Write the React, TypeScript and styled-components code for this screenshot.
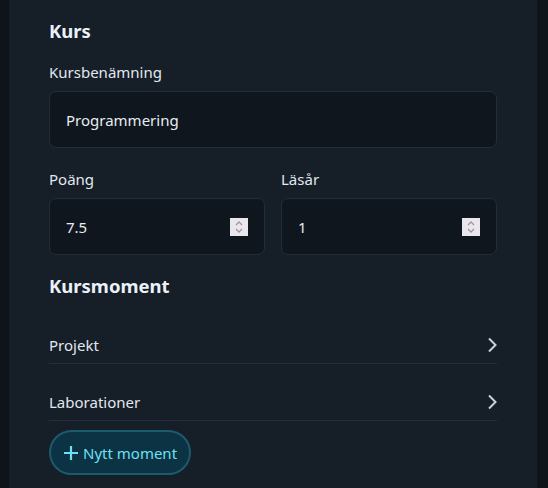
import React, { useState } from "react";
import styled, { createGlobalStyle } from "styled-components";

const GlobalStyle = createGlobalStyle`
  html, body {
    margin: 0;
    padding: 0;
    background: #0f141a;
  }
  body {
    font-family: "Noto Sans", "Open Sans", "DejaVu Sans", sans-serif;
    color: #e6edf3;
  }
`;

type Moment = { id: number; name: string };

const App: React.FC = () => {
  const [courseName, setCourseName] = useState<string>("Programmering");
  const [points, setPoints] = useState<string>("7.5");
  const [year, setYear] = useState<string>("1");
  const [moments] = useState<Moment[]>([
    { id: 1, name: "Projekt" },
    { id: 2, name: "Laborationer" },
  ]);

  return (
    <>
      <GlobalStyle />
      <Page>
        <Panel>
          <Heading $bottom={17}>Kurs</Heading>
          <Field $bottom={21}>
            <Label htmlFor="course_name">Kursbenämning</Label>
            <InputBox>
              <TextInput
                id="course_name"
                value={courseName}
                onChange={(e) => setCourseName(e.target.value)}
              />
            </InputBox>
          </Field>
          <FieldRow>
            <Field>
              <Label htmlFor="points">Poäng</Label>
              <InputBox>
                <TextInput id="points" value={points} onChange={(e) => setPoints(e.target.value)} />
                <Spinner />
              </InputBox>
            </Field>
            <Field>
              <Label htmlFor="year">Läsår</Label>
              <InputBox>
                <TextInput id="year" value={year} onChange={(e) => setYear(e.target.value)} />
                <Spinner />
              </InputBox>
            </Field>
          </FieldRow>
          <Heading $top={17} $bottom={7}>Kursmoment</Heading>
          <MomentList>
            {moments.map((m) => (
              <MomentRow key={m.id}>
                <span>{m.name}</span>
                <svg width="10" height="16" viewBox="0 0 10 16" fill="none">
                  <path d="M2 1.5l6.5 6.5-6.5 6.5" stroke="#c9d1d9" strokeWidth="2" />
                </svg>
              </MomentRow>
            ))}
          </MomentList>
          <AddButton>
            <svg width="14" height="14" viewBox="0 0 14 14">
              <path d="M7 0v14M0 7h14" stroke="currentColor" strokeWidth="2.2" />
            </svg>
            Nytt moment
          </AddButton>
        </Panel>
      </Page>
    </>
  );
};

const Spinner: React.FC = () => (
  <SpinBox>
    <svg width="10" height="14" viewBox="0 0 10 14" fill="none">
      <path d="M2 5l3-3 3 3M2 9l3 3 3-3" stroke="#9b98a3" strokeWidth="1.3" />
    </svg>
  </SpinBox>
);

const Page = styled.div`
  display: flex;
  padding: 0 11px 0 9px;
  min-height: 488px;
  box-sizing: border-box;
`;

const Panel = styled.div`
  flex: 1;
  min-width: 0;
  background: #161e27;
  padding: 17px 40px 15px 40px;
  display: flex;
  flex-direction: column;
`;

const Heading = styled.h2<{ $top?: number; $bottom?: number }>`
  margin: ${({ $top }) => $top ?? 0}px 0 ${({ $bottom }) => $bottom ?? 0}px 0;
  font-size: 18.5px;
  font-weight: 700;
  line-height: 28px;
  color: #eaf1f8;
`;

const Field = styled.div<{ $bottom?: number }>`
  display: flex;
  flex-direction: column;
  flex: 1;
  min-width: 0;
  margin-bottom: ${({ $bottom }) => $bottom ?? 0}px;
`;

const FieldRow = styled.div`
  display: flex;
  gap: 16px;
`;

const Label = styled.label`
  font-size: 15px;
  line-height: 20px;
  margin-bottom: 9px;
  color: #e1e8ef;
`;

const InputBox = styled.div`
  display: flex;
  align-items: center;
  height: 57px;
  box-sizing: border-box;
  background: #10161d;
  border: 1px solid #232d38;
  border-radius: 7px;
  padding: 0 16px 0 16px;
`;

const TextInput = styled.input`
  flex: 1;
  width: 100%;
  min-width: 0;
  background: transparent;
  border: none;
  outline: none;
  font-family: inherit;
  font-size: 15px;
  color: #e6edf3;
  padding: 0;
`;

const SpinBox = styled.div`
  flex: none;
  width: 18px;
  height: 18px;
  background: #e9e7ec;
  display: flex;
  align-items: center;
  justify-content: center;
`;

const MomentList = styled.div`
  display: flex;
  flex-direction: column;
`;

const MomentRow = styled.div`
  display: flex;
  align-items: center;
  justify-content: space-between;
  height: 57px;
  box-sizing: border-box;
  padding-top: 19px;
  border-bottom: 1px solid #222c3a;
  font-size: 15px;
  color: #e1e8ef;
`;

const AddButton = styled.button`
  align-self: flex-start;
  margin-top: 9px;
  display: flex;
  align-items: center;
  gap: 5px;
  height: 45px;
  padding: 0 12px 0 13px;
  border-radius: 999px;
  background: #0b3343;
  border: 2px solid #1c5b6d;
  color: #6ee0f4;
  font-family: inherit;
  font-size: 15px;
  cursor: pointer;
`;

export default App;
